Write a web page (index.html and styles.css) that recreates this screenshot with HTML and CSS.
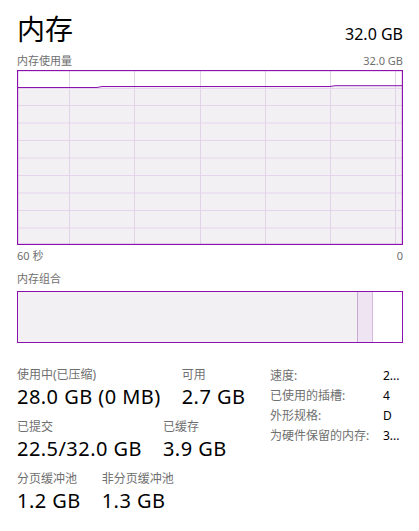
FILE: index.html
```html
<!DOCTYPE html>
<html lang="zh-CN">
<head>
<meta charset="utf-8">
<title>内存</title>
<link rel="stylesheet" href="styles.css">
</head>
<body>
<div class="page">
  <div class="header">
    <div class="title">内存</div>
    <div class="total">32.0 GB</div>
  </div>

  <div class="caption-row top-caption">
    <span>内存使用量</span>
    <span>32.0 GB</span>
  </div>

  <svg class="usage-graph" width="386" height="175" viewBox="0 0 386 175" xmlns="http://www.w3.org/2000/svg">
    <rect x="0" y="0" width="386" height="175" fill="#ffffff"/>
    <path d="M0 17.5 L80 17.5 L85 16.5 L313 16.5 L318 15.7 L386 15.7 L386 175 L0 175 Z" fill="#f3f0f4"/>
    <g stroke="#e6d4ec" stroke-width="1">
      <line x1="0" y1="35.5" x2="386" y2="35.5"/>
      <line x1="0" y1="53" x2="386" y2="53"/>
      <line x1="0" y1="70.5" x2="386" y2="70.5"/>
      <line x1="0" y1="88" x2="386" y2="88"/>
      <line x1="0" y1="105.5" x2="386" y2="105.5"/>
      <line x1="0" y1="123" x2="386" y2="123"/>
      <line x1="0" y1="140.5" x2="386" y2="140.5"/>
      <line x1="0" y1="158" x2="386" y2="158"/>
      <line x1="0" y1="18.5" x2="386" y2="18.5"/>
    </g>
    <g stroke="#e2d4e8" stroke-width="1">
      <line x1="52.5" y1="0" x2="52.5" y2="175"/>
      <line x1="117.5" y1="0" x2="117.5" y2="175"/>
      <line x1="183.5" y1="0" x2="183.5" y2="175"/>
      <line x1="248.5" y1="0" x2="248.5" y2="175"/>
      <line x1="313.5" y1="0" x2="313.5" y2="175"/>
      <line x1="378.5" y1="0" x2="378.5" y2="175"/>
    </g>
    <path d="M0 17.5 L80 17.5 L85 16.5 L313 16.5 L318 15.7 L386 15.7" fill="none" stroke="#8b12ae" stroke-width="1"/>
    <rect x="0.5" y="0.5" width="385" height="174" fill="none" stroke="#8b12ae" stroke-width="1.3"/>
  </svg>

  <div class="caption-row axis-caption">
    <span>60 秒</span>
    <span>0</span>
  </div>

  <div class="caption-row comp-caption">
    <span>内存组合</span>
  </div>

  <div class="composition">
    <div class="seg seg-used"></div>
    <div class="seg seg-modified"></div>
    <div class="seg seg-free"></div>
  </div>

  <div class="stats">
    <div class="stats-left">
      <div class="stat-row">
        <div class="stat">
          <div class="stat-label">使用中(已压缩)</div>
          <div class="stat-value">28.0 GB (0 MB)</div>
        </div>
        <div class="stat">
          <div class="stat-label">可用</div>
          <div class="stat-value">2.7 GB</div>
        </div>
      </div>
      <div class="stat-row">
        <div class="stat">
          <div class="stat-label">已提交</div>
          <div class="stat-value">22.5/32.0 GB</div>
        </div>
        <div class="stat">
          <div class="stat-label">已缓存</div>
          <div class="stat-value">3.9 GB</div>
        </div>
      </div>
      <div class="stat-row">
        <div class="stat">
          <div class="stat-label">分页缓冲池</div>
          <div class="stat-value">1.2 GB</div>
        </div>
        <div class="stat">
          <div class="stat-label">非分页缓冲池</div>
          <div class="stat-value">1.3 GB</div>
        </div>
      </div>
    </div>
    <div class="stats-right">
      <div class="kv-label">速度:</div><div class="kv-value">2...</div>
      <div class="kv-label">已使用的插槽:</div><div class="kv-value">4</div>
      <div class="kv-label">外形规格:</div><div class="kv-value">D</div>
      <div class="kv-label">为硬件保留的内存:</div><div class="kv-value">3...</div>
    </div>
  </div>
</div>
</body>
</html>
```

FILE: styles.css
```css
html, body {
  margin: 0;
  padding: 0;
  background: #ffffff;
}

body {
  font-family: "Noto Sans", "Noto Sans CJK SC", sans-serif;
  color: #000000;
}

.page {
  width: 386px;
  padding: 0 16px 0 17px;
}

.header {
  display: flex;
  justify-content: space-between;
  align-items: baseline;
  padding-top: 11px;
  height: 36px;
}

.title {
  font-size: 28px;
  line-height: 36px;
  font-weight: 400;
}

.total {
  font-size: 16px;
  line-height: 20px;
}

.caption-row {
  display: flex;
  justify-content: space-between;
  font-size: 11px;
  line-height: 15px;
  color: #6f6f6f;
}

.top-caption {
  margin-top: 6px;
  margin-bottom: 2px;
}

.usage-graph {
  display: block;
}

.axis-caption {
  margin-top: 3px;
}

.comp-caption {
  margin-top: 8px;
}

.composition {
  display: flex;
  height: 50px;
  margin-top: 5px;
  border: 1.3px solid #8b12ae;
}

.seg-used {
  width: 339px;
  background: #f3f0f4;
  border-right: 1px solid #c9a7d5;
}

.seg-modified {
  width: 14px;
  background: #eee4f2;
  border-right: 1px solid #d5b9df;
}

.seg-free {
  flex: 1;
  background: #ffffff;
}

.stats {
  display: flex;
  margin-top: 23px;
}

.stats-left {
  width: 253px;
  display: flex;
  flex-direction: column;
  gap: 8px;
}

.stat-row {
  display: flex;
  gap: 21px;
}

.stat-label {
  font-size: 12px;
  line-height: 18px;
  color: #6f6f6f;
}

.stat-value {
  font-size: 20px;
  line-height: 26px;
  letter-spacing: 0.45px;
  color: #000000;
}

.stats-right {
  display: grid;
  grid-template-columns: 113px auto;
  grid-auto-rows: 20px;
  font-size: 12px;
  line-height: 20px;
}

.kv-label {
  color: #6f6f6f;
  white-space: nowrap;
}

.kv-value {
  color: #000000;
  white-space: nowrap;
}
```
